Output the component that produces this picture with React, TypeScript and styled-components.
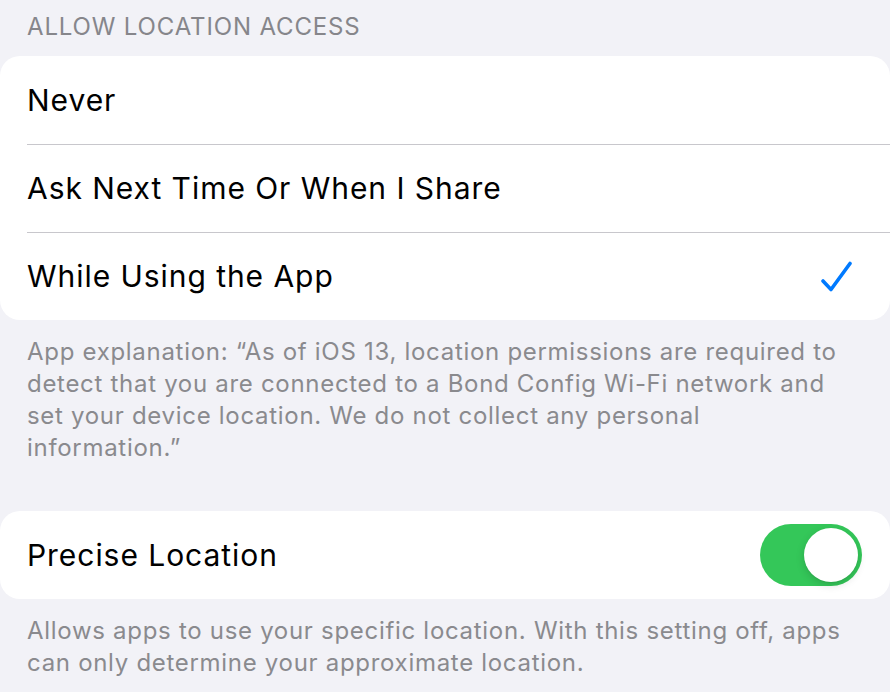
import React, { JSX } from 'react';
import styled, { createGlobalStyle } from 'styled-components';

const GlobalStyle = createGlobalStyle`
  html, body {
    margin: 0;
    padding: 0;
    background: #f2f2f7;
  }

  body {
    font-family: Inter, 'Noto Sans', 'Liberation Sans', sans-serif;
    -webkit-font-smoothing: antialiased;
  }
`;

const Page = styled.div`
  width: 890px;
  height: 692px;
  overflow: hidden;
  display: flex;
  flex-direction: column;
`;

const SectionHeader = styled.div`
  padding: 12px 27px 0;
  height: 44px;
  font-size: 24px;
  line-height: 30px;
  letter-spacing: 0.85px;
  color: #86868b;
  text-transform: uppercase;
`;

const Card = styled.div`
  background: #fff;
  border-radius: 20px;
  overflow: hidden;
`;

const Row = styled.div<{ $divider?: boolean }>`
  height: 88px;
  display: flex;
  align-items: center;
  justify-content: space-between;
  padding: 0 28px 0 27px;
  position: relative;

  &::before {
    content: '';
    display: ${({ $divider }) => ($divider ? 'block' : 'none')};
    position: absolute;
    top: 0;
    left: 27px;
    right: 0;
    height: 1px;
    background: #c8c7cc;
  }
`;

const RowLabel = styled.span`
  font-size: 30px;
  letter-spacing: 0.95px;
  color: #000;
`;

const CheckMark = styled.svg`
  margin-right: 8px;
  margin-top: 2px;
`;

const Footer = styled.p`
  margin: 0;
  padding: 16px 40px 0 27px;
  font-size: 24px;
  line-height: 32px;
  letter-spacing: 0.7px;
  color: #8a8a8e;
`;

const Spacer = styled.div<{ $h: number }>`
  height: ${({ $h }) => $h}px;
`;

const Toggle = styled.div<{ $on: boolean }>`
  width: 102px;
  height: 62px;
  border-radius: 31px;
  background: ${({ $on }) => ($on ? '#34c759' : '#e9e9ea')};
  display: flex;
  align-items: center;
  justify-content: ${({ $on }) => ($on ? 'flex-end' : 'flex-start')};
  padding: 0 4px;
  box-sizing: border-box;
`;

const Knob = styled.div`
  width: 54px;
  height: 54px;
  border-radius: 50%;
  background: #fff;
  box-shadow: 0 3px 8px rgba(0, 0, 0, 0.15), 0 1px 1px rgba(0, 0, 0, 0.06);
`;

const Check = (): JSX.Element => (
  <CheckMark width='34' height='32' viewBox='0 0 34 32' fill='none'>
    <path
      d='M3 20 L11 28.5 L30 2.5'
      stroke='#007aff'
      strokeWidth='3.6'
      strokeLinecap='round'
      strokeLinejoin='round'
    />
  </CheckMark>
);

const options = ['Never', 'Ask Next Time Or When I Share', 'While Using the App'];

const App = (): JSX.Element => (
  <Page>
    <GlobalStyle />
    <SectionHeader>Allow Location Access</SectionHeader>
    <Card>
      {options.map((label, index) => (
        <Row key={label} $divider={index > 0}>
          <RowLabel>{label}</RowLabel>
          {index === 2 && <Check />}
        </Row>
      ))}
    </Card>
    <Footer>
      App explanation: “As of iOS 13, location permissions are required to detect that you are
      connected to a Bond Config Wi-Fi network and set your device location. We do not collect
      any personal information.”
    </Footer>
    <Spacer $h={47} />
    <Card>
      <Row>
        <RowLabel>Precise Location</RowLabel>
        <Toggle $on>
          <Knob />
        </Toggle>
      </Row>
    </Card>
    <Footer>
      Allows apps to use your specific location. With this setting off, apps can only determine
      your approximate location.
    </Footer>
  </Page>
);

export default App;
